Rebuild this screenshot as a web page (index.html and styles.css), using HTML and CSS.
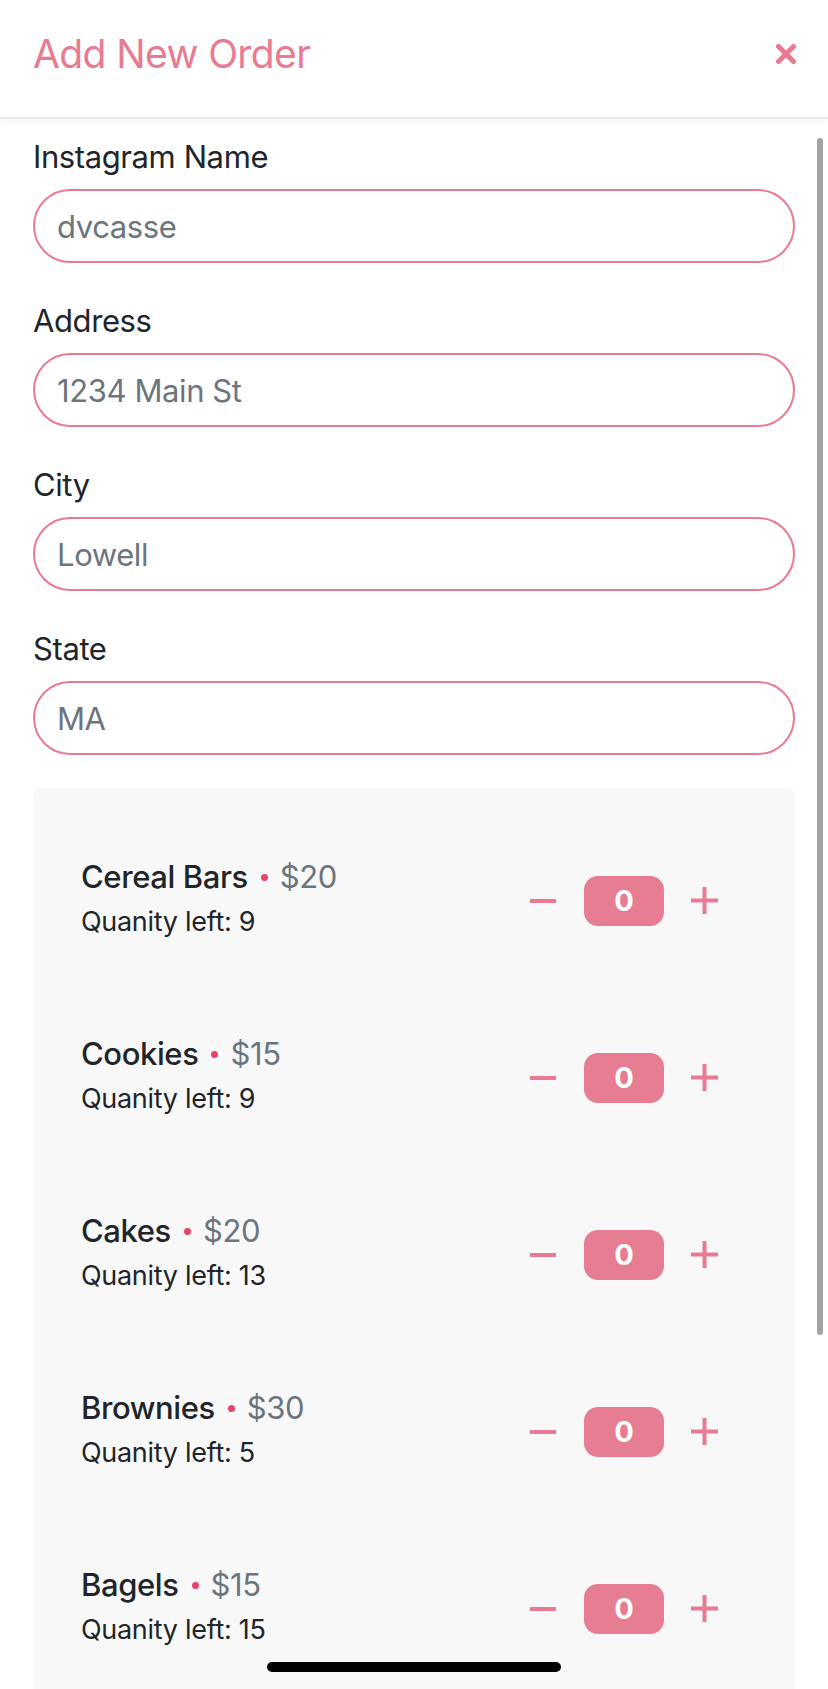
FILE: index.html
```html
<!DOCTYPE html>
<html lang="en">
<head>
<meta charset="utf-8">
<title>Add New Order</title>
<link rel="stylesheet" href="styles.css">
</head>
<body>
<div class="modal">
  <header class="modal-header">
    <h1 class="modal-title">Add New Order</h1>
    <button class="close" aria-label="Close">
      <svg width="22" height="22" viewBox="0 0 22 22"><path d="M3.5 3.5 L18.5 18.5 M18.5 3.5 L3.5 18.5" stroke="#e97a92" stroke-width="5" stroke-linecap="round"/></svg>
    </button>
  </header>
  <main class="modal-body">
    <div class="form-group">
      <label class="form-label">Instagram Name</label>
      <input class="form-input" type="text" placeholder="dvcasse">
    </div>
    <div class="form-group">
      <label class="form-label">Address</label>
      <input class="form-input" type="text" placeholder="1234 Main St">
    </div>
    <div class="form-group">
      <label class="form-label">City</label>
      <input class="form-input" type="text" placeholder="Lowell">
    </div>
    <div class="form-group">
      <label class="form-label">State</label>
      <input class="form-input" type="text" placeholder="MA">
    </div>

    <section class="products">
      <div class="product">
        <div class="product-info">
          <div class="product-name">Cereal Bars<span class="dot"></span><span class="price">$20</span></div>
          <div class="product-qty">Quanity left: 9</div>
        </div>
        <div class="stepper">
          <svg class="minus" width="26" height="26" viewBox="0 0 26 26"><path d="M0 13 H26" stroke="#e97a92" stroke-width="4"/></svg>
          <span class="count">0</span>
          <svg class="plus" width="27" height="27" viewBox="0 0 27 27"><path d="M0 13.5 H27 M13.5 0 V27" stroke="#e97a92" stroke-width="4"/></svg>
        </div>
      </div>
      <div class="product">
        <div class="product-info">
          <div class="product-name">Cookies<span class="dot"></span><span class="price">$15</span></div>
          <div class="product-qty">Quanity left: 9</div>
        </div>
        <div class="stepper">
          <svg class="minus" width="26" height="26" viewBox="0 0 26 26"><path d="M0 13 H26" stroke="#e97a92" stroke-width="4"/></svg>
          <span class="count">0</span>
          <svg class="plus" width="27" height="27" viewBox="0 0 27 27"><path d="M0 13.5 H27 M13.5 0 V27" stroke="#e97a92" stroke-width="4"/></svg>
        </div>
      </div>
      <div class="product">
        <div class="product-info">
          <div class="product-name">Cakes<span class="dot"></span><span class="price">$20</span></div>
          <div class="product-qty">Quanity left: 13</div>
        </div>
        <div class="stepper">
          <svg class="minus" width="26" height="26" viewBox="0 0 26 26"><path d="M0 13 H26" stroke="#e97a92" stroke-width="4"/></svg>
          <span class="count">0</span>
          <svg class="plus" width="27" height="27" viewBox="0 0 27 27"><path d="M0 13.5 H27 M13.5 0 V27" stroke="#e97a92" stroke-width="4"/></svg>
        </div>
      </div>
      <div class="product">
        <div class="product-info">
          <div class="product-name">Brownies<span class="dot"></span><span class="price">$30</span></div>
          <div class="product-qty">Quanity left: 5</div>
        </div>
        <div class="stepper">
          <svg class="minus" width="26" height="26" viewBox="0 0 26 26"><path d="M0 13 H26" stroke="#e97a92" stroke-width="4"/></svg>
          <span class="count">0</span>
          <svg class="plus" width="27" height="27" viewBox="0 0 27 27"><path d="M0 13.5 H27 M13.5 0 V27" stroke="#e97a92" stroke-width="4"/></svg>
        </div>
      </div>
      <div class="product">
        <div class="product-info">
          <div class="product-name">Bagels<span class="dot"></span><span class="price">$15</span></div>
          <div class="product-qty">Quanity left: 15</div>
        </div>
        <div class="stepper">
          <svg class="minus" width="26" height="26" viewBox="0 0 26 26"><path d="M0 13 H26" stroke="#e97a92" stroke-width="4"/></svg>
          <span class="count">0</span>
          <svg class="plus" width="27" height="27" viewBox="0 0 27 27"><path d="M0 13.5 H27 M13.5 0 V27" stroke="#e97a92" stroke-width="4"/></svg>
        </div>
      </div>
    </section>
  </main>
  <div class="scrollbar"></div>
  <div class="home-indicator"></div>
</div>
</body>
</html>
```

FILE: styles.css
```css
* { box-sizing: border-box; }

html, body {
  margin: 0;
  padding: 0;
  background: #ffffff;
}

body {
  font-family: Inter, "Liberation Sans", Arial, sans-serif;
  color: #212529;
  width: 828px;
  height: 1689px;
  overflow: hidden;
}

.modal {
  position: relative;
  width: 828px;
  height: 1689px;
  overflow: hidden;
  display: flex;
  flex-direction: column;
}

.modal-header {
  flex: 0 0 119px;
  display: flex;
  align-items: center;
  justify-content: space-between;
  padding: 0 31px 10px 33px;
  border-bottom: 2px solid #e4e4ea;
  box-shadow: 0 3px 6px rgba(0, 0, 0, 0.04);
  position: relative;
  z-index: 2;
  background: #fff;
}

.modal-title {
  margin: 0;
  font-size: 39px;
  font-weight: 400;
  letter-spacing: -0.6px;
  line-height: 48px;
  color: #e97a92;
}

.close {
  border: 0;
  background: transparent;
  padding: 0;
  width: 22px;
  height: 22px;
  display: flex;
}

.modal-body {
  flex: 1;
  padding: 14px 33px 0 33px;
  overflow: hidden;
}

.form-group {
  margin-bottom: 34px;
}

.form-label {
  display: block;
  font-size: 31px;
  line-height: 48px;
  letter-spacing: -0.4px;
  margin-bottom: 8px;
  color: #212529;
}

.form-input {
  display: block;
  width: 100%;
  height: 74px;
  border: 2px solid #e97a92;
  border-radius: 37px;
  padding: 0 22px;
  font-family: inherit;
  font-size: 31px;
  letter-spacing: -0.4px;
  color: #212529;
  background: #fff;
  outline: none;
}

.form-input::placeholder {
  color: #6c757d;
  opacity: 1;
}

.products {
  background: #f8f8f8;
  border-radius: 8px;
  padding: 21px 0 200px;
  margin-top: -1px;
}

.product {
  height: 177px;
  display: flex;
  align-items: center;
  justify-content: space-between;
  padding: 0 77px 0 48px;
}

.product-name {
  font-size: 31px;
  line-height: 48px;
  font-weight: 500;
  letter-spacing: -0.4px;
  color: #212529;
}

.dot {
  display: inline-block;
  width: 7px;
  height: 7px;
  border-radius: 50%;
  background: #e8436a;
  vertical-align: middle;
  margin: 0 12px 0 13px;
  position: relative;
  top: -2px;
}

.price {
  font-weight: 400;
  color: #6c757d;
}

.product-qty {
  font-size: 27px;
  line-height: 42px;
  letter-spacing: -0.3px;
  color: #212529;
}

.stepper {
  display: flex;
  align-items: center;
  margin-top: 6px;
}

.minus {
  margin-right: 28px;
}

.plus {
  margin-left: 27px;
}

.count {
  width: 80px;
  height: 50px;
  border-radius: 14px;
  background: #e77d93;
  color: #fff;
  font-weight: 700;
  font-size: 29px;
  display: flex;
  align-items: center;
  justify-content: center;
}

.scrollbar {
  position: absolute;
  left: 817px;
  top: 138px;
  width: 6px;
  height: 1197px;
  border-radius: 3px;
  background: #a3a3a3;
  z-index: 3;
}

.home-indicator {
  position: absolute;
  left: 267px;
  top: 1662px;
  width: 294px;
  height: 10px;
  border-radius: 5px;
  background: #000;
  z-index: 3;
}
```
